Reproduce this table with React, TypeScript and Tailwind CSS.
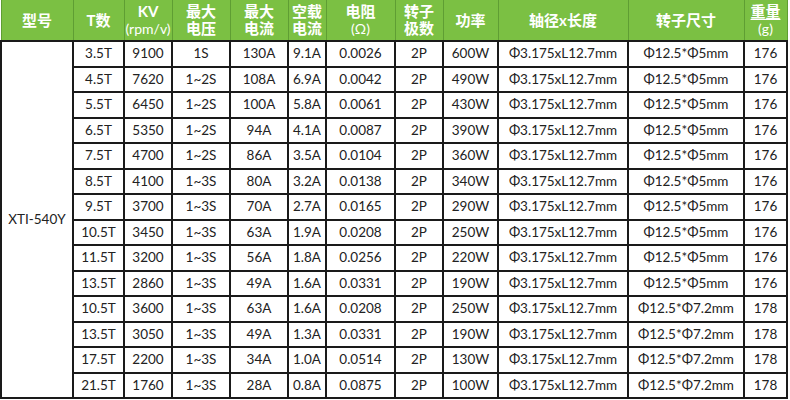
import React from 'react';

const rows = [
  ['3.5T', '9100', '1S', '130A', '9.1A', '0.0026', '2P', '600W', 'Φ12.5*Φ5mm', '176'],
  ['4.5T', '7620', '1~2S', '108A', '6.9A', '0.0042', '2P', '490W', 'Φ12.5*Φ5mm', '176'],
  ['5.5T', '6450', '1~2S', '100A', '5.8A', '0.0061', '2P', '430W', 'Φ12.5*Φ5mm', '176'],
  ['6.5T', '5350', '1~2S', '94A', '4.1A', '0.0087', '2P', '390W', 'Φ12.5*Φ5mm', '176'],
  ['7.5T', '4700', '1~2S', '86A', '3.5A', '0.0104', '2P', '360W', 'Φ12.5*Φ5mm', '176'],
  ['8.5T', '4100', '1~3S', '80A', '3.2A', '0.0138', '2P', '340W', 'Φ12.5*Φ5mm', '176'],
  ['9.5T', '3700', '1~3S', '70A', '2.7A', '0.0165', '2P', '290W', 'Φ12.5*Φ5mm', '176'],
  ['10.5T', '3450', '1~3S', '63A', '1.9A', '0.0208', '2P', '250W', 'Φ12.5*Φ5mm', '176'],
  ['11.5T', '3200', '1~3S', '56A', '1.8A', '0.0256', '2P', '220W', 'Φ12.5*Φ5mm', '176'],
  ['13.5T', '2860', '1~3S', '49A', '1.6A', '0.0331', '2P', '190W', 'Φ12.5*Φ5mm', '176'],
  ['10.5T', '3600', '1~3S', '63A', '1.6A', '0.0208', '2P', '250W', 'Φ12.5*Φ7.2mm', '178'],
  ['13.5T', '3050', '1~3S', '49A', '1.3A', '0.0331', '2P', '190W', 'Φ12.5*Φ7.2mm', '178'],
  ['17.5T', '2200', '1~3S', '34A', '1.0A', '0.0514', '2P', '130W', 'Φ12.5*Φ7.2mm', '178'],
  ['21.5T', '1760', '1~3S', '28A', '0.8A', '0.0875', '2P', '100W', 'Φ12.5*Φ7.2mm', '178'],
];

const widths = [72, 51, 48, 58, 58, 38, 69, 48, 55, 130, 116, 43];

const headers: React.ReactNode[] = [
  '型号',
  'T数',
  <>KV<br /><span className="font-normal text-[14px]">(rpm/v)</span></>,
  <>最大<br />电压</>,
  <>最大<br />电流</>,
  <>空载<br />电流</>,
  <>电阻<br /><span className="font-normal text-[14px]">(Ω)</span></>,
  <>转子<br />极数</>,
  '功率',
  '轴径x长度',
  '转子尺寸',
  <><span className="underline underline-offset-2">重量</span><br /><span className="font-normal text-[14px]">(g)</span></>,
];

const cell = 'border-2 border-[#1a1a1a] text-[13.5px] text-[#222] text-center align-middle p-0 leading-none';

export default function App() {
  return (
    <div className="w-[790px] h-[400px] bg-white overflow-hidden" style={{ fontFamily: 'Lato, "Noto Sans CJK SC", sans-serif' }}>
      <table className="border-collapse table-fixed w-[787px]">
        <colgroup>
          {widths.map((w, i) => (
            <col key={i} style={{ width: w }} />
          ))}
        </colgroup>
        <thead>
          <tr className="h-[41px] bg-[#7bc043]">
            {headers.map((h, i) => (
              <th
                key={i}
                className="border-x border-[#5f9e33] text-white font-bold text-[15px] leading-[17px] text-center align-middle p-0"
              >
                {h}
              </th>
            ))}
          </tr>
        </thead>
        <tbody>
          {rows.map((r, ri) => (
            <tr key={ri} className="h-[25.5px]">
              {ri === 0 && (
                <td rowSpan={14} className={cell}>
                  XTI-540Y
                </td>
              )}
              {r.slice(0, 8).map((c, ci) => (
                <td key={ci} className={cell}>
                  {c}
                </td>
              ))}
              <td className={cell}>Φ3.175xL12.7mm</td>
              {r.slice(8).map((c, ci) => (
                <td key={ci} className={cell}>
                  {c}
                </td>
              ))}
            </tr>
          ))}
        </tbody>
      </table>
    </div>
  );
}
